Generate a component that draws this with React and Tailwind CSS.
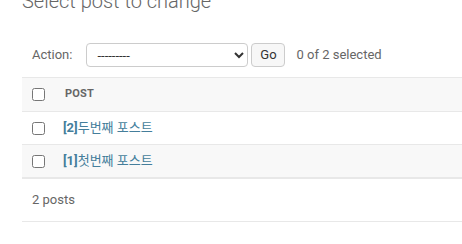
import React from "react";

const posts = [
  { id: 2, title: "두번째 포스트" },
  { id: 1, title: "첫번째 포스트" },
];

function Check() {
  return (
    <input
      type="checkbox"
      className="m-0 h-[13px] w-[13px] shrink-0 accent-[#447e9b]"
    />
  );
}

export default function App() {
  return (
    <div
      className="h-[244px] w-[462px] overflow-hidden bg-white pl-[22px] text-[13px] text-[#333]"
      style={{ fontFamily: 'Roboto, "Noto Sans CJK KR", sans-serif' }}
    >
      <h1 className="mt-[-11px] h-[24px] text-[20px] leading-[24px] font-light text-[#666]">
        Select post to change
      </h1>

      {/* actions bar */}
      <div className="mt-[20px] flex h-[44px] items-center pl-[10px]">
        <span className="text-[#666]">Action:</span>
        <select className="ml-[14px] h-[24px] w-[162px] rounded-[4px] border border-[#ccc] bg-white pl-[6px] text-[13px] text-[#333]">
          <option>---------</option>
        </select>
        <button className="ml-[3px] h-[24px] w-[34px] rounded-[4px] border border-[#ccc] bg-[#f7f7f7] text-[13px] leading-[22px] text-[#333]">
          Go
        </button>
        <span className="ml-[11px] text-[#666]">0 of 2 selected</span>
      </div>

      {/* results table */}
      <div className="border-b-2 border-[#e8e8e8]">
        <div className="flex h-[34px] items-center border-t border-[#e8e8e8] bg-[#f8f8f8] pl-[10px]">
          <Check />
          <span className="ml-[20px] text-[11px] font-bold tracking-[0.2px] text-[#666] uppercase">
            Post
          </span>
        </div>
        {posts.map((p, i) => (
          <div
            key={p.id}
            className={
              "flex h-[33px] items-center border-t border-[#e8e8e8] pl-[10px] " +
              (i % 2 ? "bg-[#f8f8f8]" : "bg-white")
            }
          >
            <Check />
            <a className="ml-[18px] text-[13px] text-[#447e9b]">
              <span className="font-bold">[{p.id}]</span>
              <span>{p.title}</span>
            </a>
          </div>
        ))}
      </div>

      <p className="border-b border-[#e8e8e8] py-[10px] pl-[10px] leading-[22px] text-[#666]">
        2 posts
      </p>
    </div>
  );
}
